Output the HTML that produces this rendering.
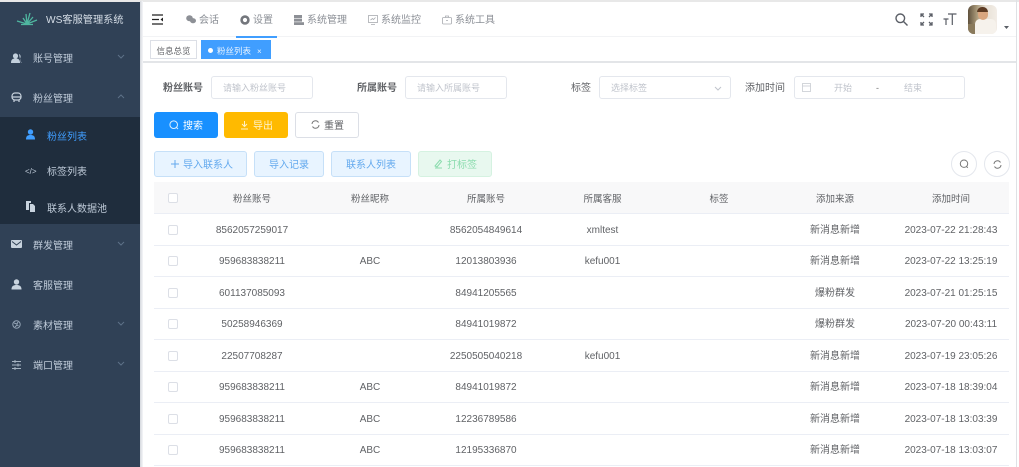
<!DOCTYPE html>
<html lang="zh"><head><meta charset="utf-8"><style>
*{box-sizing:border-box;margin:0;padding:0}
html,body{width:1019px;height:467px;overflow:hidden;background:#fff}
body{position:relative;font:10px/12px "Liberation Sans","Noto Sans CJK SC",sans-serif;color:#606266;filter:blur(.35px)}
.a{position:absolute;white-space:nowrap}
svg{position:absolute;overflow:visible}
.m{left:33px;color:#bfcbd9;font-size:10px;line-height:12px}
.s{left:47px;color:#bfcbd9}
.inp{border:1px solid #e4e7ed;border-radius:3px;height:23px;top:76px;background:#fff;color:#c0c4cc;line-height:23px;font-size:9px;padding-left:11px}
.lb{top:83px;color:#606266;font-weight:bold;font-size:10px}
.btn{border-radius:3px;height:26px;top:112px;line-height:30px;text-align:center}
.b2{border:1px solid #c6e0f8;background:#e8f4ff;color:#63a9ee;border-radius:3px;height:26px;top:151px;line-height:28px;text-align:center}
.r{position:absolute;left:154px;width:855px;height:31.5px;border-bottom:1px solid #ebeef5;display:grid;grid-template-columns:38px 120px 116px 116px 117px 116px 116px 116px;align-items:center;text-align:center;color:#606266}
.r span{position:relative;top:1.5px}
.r i{display:block;width:10px;height:10px;border:1px solid #dcdfe6;border-radius:2px;margin-left:14px;background:#fff;position:relative;top:1px}
.h{background:#f8f8f9;color:#606266;font-size:9.5px}
.h span{top:2.5px}
.nv{top:15px;color:#8b8f96;font-size:10px}
</style></head><body>
<div class="a" style="left:0;top:1px;width:140px;height:466px;background:#304156"></div>
<div class="a" style="left:0;top:117px;width:140px;height:107px;background:#1f2d3d"></div>
<div class="a" style="left:0;top:0;width:1019px;height:1.5px;background:#e8e8e8"></div>
<div class="a" style="left:140px;top:1px;width:3px;height:466px;background:linear-gradient(90deg,#d5d8de,#f5f6f8)"></div>
<div class="a" style="left:1016px;top:0;width:1px;height:467px;background:#dfe1e5"></div>

<svg style="left:16px;top:11px" width="22" height="16" viewBox="0 0 22 16" fill="none" stroke="#4fb6a0" stroke-width="1.3"><path d="M11 13L10 3M11 13L14 2M11 13L7 7M11 13L17 6M11 13L1 10M11 13L21 9M5 13.5L17 13.5"/></svg>
<div class="a" style="left:46px;top:15px;color:#d5dde6;font-size:10.2px">WS客服管理系统</div>

<svg style="left:11px;top:53px" width="11" height="11" viewBox="0 0 11 11" fill="#c2cfdc"><circle cx="4.5" cy="3" r="2.6"/><path d="M0 10c0-4 2-4.5 4.5-4.5S9 6 9 10z"/><path d="M8 1c2 1 2 3 1 4.500l1.500 4.500H10L9 6z"/></svg>
<div class="a m" style="top:54px">账号管理</div>
<svg style="left:117px;top:54px" width="8" height="5" fill="none" stroke="#5d7188"><path d="M1 1l3 3 3-3"/></svg>

<svg style="left:11px;top:92px" width="11" height="11" viewBox="0 0 11 11" fill="none" stroke="#c8d3de" stroke-width="1.2"><rect x="1" y="1" width="9" height="7" rx="3"/><path d="M0.500 5h10M3 8v2M8 8v2"/></svg>
<div class="a m" style="top:94px">粉丝管理</div>
<svg style="left:117px;top:94px" width="8" height="5" fill="none" stroke="#5d7188"><path d="M1 4l3-3 3 3"/></svg>

<svg style="left:25px;top:129px" width="11" height="11" viewBox="0 0 11 11" fill="#409eff"><circle cx="5.500" cy="3" r="2.700"/><path d="M1 10.500c0-3.500 1.500-4.500 4.500-4.500s4.500 1 4.500 4.500z"/></svg>
<div class="a" style="left:47px;top:132px;color:#409eff">粉丝列表</div>
<div class="a" style="left:25px;top:166px;color:#bfcbd9;font-size:8px">&lt;/&gt;</div>
<div class="a s" style="top:167px">标签列表</div>
<svg style="left:25px;top:201px" width="11" height="11" viewBox="0 0 11 11" fill="#c8d3de"><path d="M1 0h5v2H4v7H1z"/><path d="M5 3h3l2 2v6H5z"/></svg>
<div class="a s" style="top:204px">联系人数据池</div>

<svg style="left:11px;top:240px" width="11" height="9" viewBox="0 0 11 9"><rect width="11" height="8" rx="1" fill="#c8d3de"/><path d="M1 1.500l4.500 3.500L10 1.500" fill="none" stroke="#304156"/></svg>
<div class="a m" style="top:241px">群发管理</div>
<svg style="left:117px;top:241px" width="8" height="5" fill="none" stroke="#5d7188"><path d="M1 1l3 3 3-3"/></svg>

<svg style="left:11px;top:279px" width="11" height="11" viewBox="0 0 11 11" fill="#c8d3de"><circle cx="5.500" cy="3" r="2.700"/><path d="M0.500 10.500c0-3.500 2-4.500 5-4.500s5 1 5 4.500z"/></svg>
<div class="a m" style="top:281px">客服管理</div>

<svg style="left:12px;top:320px" width="9" height="9" viewBox="0 0 9 9" fill="none" stroke="#93a3b5"><circle cx="4.500" cy="4.500" r="3.700"/><path d="M2 3l3 1 1-2M3 7l2-2 1.500 1"/></svg>
<div class="a m" style="top:321px">素材管理</div>
<svg style="left:117px;top:321px" width="8" height="5" fill="none" stroke="#5d7188"><path d="M1 1l3 3 3-3"/></svg>

<svg style="left:12px;top:360px" width="9" height="10" viewBox="0 0 9 10" fill="none" stroke="#a5b3c2"><path d="M0 1.500h9M0 5h9M0 8.500h9M3 0v3M6 3.500v3M3 7v3"/></svg>
<div class="a m" style="top:361px">端口管理</div>
<svg style="left:117px;top:361px" width="8" height="5" fill="none" stroke="#5d7188"><path d="M1 1l3 3 3-3"/></svg>

<div class="a" style="left:143px;top:36px;width:873px;height:1px;background:#f2f3f5"></div>
<svg style="left:152px;top:14px" width="11" height="11" viewBox="0 0 11 11" fill="none" stroke="#222" stroke-width="1.200"><path d="M0 1h11M0 5.500h7M0 10h11"/><path d="M11 3.500L8.500 5.500 11 7.500z" fill="#222" stroke="none"/></svg>

<svg style="left:186px;top:15px" width="10" height="9" viewBox="0 0 10 9" fill="#8d9096"><ellipse cx="3.500" cy="3.300" rx="3.300" ry="3"/><ellipse cx="7" cy="5.700" rx="3" ry="2.600"/></svg>
<div class="a nv" style="left:199px">会话</div>
<svg style="left:240px;top:15px" width="10" height="10" viewBox="0 0 10 10" fill="none" stroke="#73767c" stroke-width="2.600"><circle cx="5" cy="5" r="3.400"/></svg>
<div class="a nv" style="left:253px">设置</div>
<div class="a" style="left:236px;top:36px;width:41px;height:1.500px;background:#409eff"></div>
<svg style="left:294px;top:15px" width="10" height="10" viewBox="0 0 10 10" fill="#8d9096"><rect width="8" height="3"/><rect y="3.600" width="8" height="3"/><rect y="7.200" width="10" height="2.800"/></svg>
<div class="a nv" style="left:307px">系统管理</div>
<svg style="left:368px;top:15px" width="10" height="10" viewBox="0 0 10 10" fill="none" stroke="#a8abb0" stroke-width=".8"><rect x=".5" y=".5" width="9" height="7"/><path d="M2.500 5l2-1.500 1 1 2-2M3 9.500h4"/></svg>
<div class="a nv" style="left:381px">系统监控</div>
<svg style="left:442px;top:15px" width="10" height="10" viewBox="0 0 10 10" fill="none" stroke="#a8abb0" stroke-width=".8"><rect x=".5" y="2.500" width="9" height="6.500" rx="1"/><path d="M3.500 2.500V1h3v1.500M4 5.500h2"/></svg>
<div class="a nv" style="left:455px">系统工具</div>

<svg style="left:895px;top:13px" width="13" height="13" viewBox="0 0 13 13" fill="none" stroke="#5a5e66" stroke-width="1.400"><circle cx="5.300" cy="5.300" r="4.300"/><path d="M8.500 8.500l4 4"/></svg>
<svg style="left:920px;top:13px" width="13" height="13" viewBox="0 0 13 13" fill="none" stroke="#5a5e66" stroke-width="1.300"><path d="M1 4V1h3M9 1h3v3M12 9v3H9M4 12H1V9M1.500 1.500l2.500 2.500M11.500 1.500L9 4M11.500 11.500L9 9M1.500 11.500L4 9"/></svg>
<svg style="left:943px;top:13px" width="14" height="13" viewBox="0 0 14 13" fill="none" stroke="#5a5e66" stroke-width="1.200"><path d="M5 1h8.500M9.300 1v11M.5 6h5M3 6v6"/></svg>
<div class="a" style="left:968px;top:5px;width:29px;height:29px;border-radius:6px;overflow:hidden;background:linear-gradient(90deg,#5f513d 0,#a89878 30%,#e8e1d6 60%,#f2ede6 100%)">
<div class="a" style="left:0;top:19px;width:9px;height:10px;background:#8a7a5c"></div>
<div class="a" style="left:7px;top:14px;width:21px;height:15px;background:#f6f2ec;border-radius:5px 5px 0 0"></div>
<div class="a" style="left:10px;top:3px;width:10px;height:12px;background:#d9a67f;border-radius:5px"></div>
<div class="a" style="left:9px;top:2px;width:11px;height:5px;background:#5c3a22;border-radius:5px 5px 0 0"></div>
</div>
<svg style="left:1004px;top:26px" width="5" height="3"><path d="M0 0h5L2.500 3z" fill="#5a5e66"/></svg>

<div class="a" style="left:143px;top:61px;width:873px;height:1.500px;background:#e3e5e8"></div>
<div class="a" style="left:150px;top:40px;width:47px;height:19px;border:1px solid #dcdfe6;background:#fff;color:#606266;font-size:8.500px;line-height:21px;text-align:center">信息总览</div>
<div class="a" style="left:201px;top:40px;width:70px;height:19px;background:#409eff;color:#e8f3ff;font-size:8.500px;line-height:23px">
<span class="a" style="left:7px;top:7.500px;width:5px;height:5px;border-radius:50%;background:#fff"></span><span class="a" style="left:16px">粉丝列表</span><span class="a" style="left:56px;font-size:8px">×</span></div>

<div class="a lb" style="left:163px">粉丝账号</div><div class="a inp" style="left:211px;width:102px">请输入粉丝账号</div>
<div class="a lb" style="left:357px">所属账号</div><div class="a inp" style="left:405px;width:102px">请输入所属账号</div>
<div class="a lb" style="left:571px;font-weight:normal">标签</div><div class="a inp" style="left:599px;width:132px">选择标签
<svg style="left:114px;top:9px" width="8" height="5" fill="none" stroke="#c0c4cc"><path d="M1 1l3 3 3-3"/></svg></div>
<div class="a lb" style="left:745px;font-weight:normal">添加时间</div><div class="a inp" style="left:794px;width:171px;padding:0">
<svg style="left:7px;top:6px" width="9" height="9" fill="none" stroke="#c9ccd2" stroke-width=".8"><rect x=".5" y=".5" width="8" height="8"/><path d="M.5 3h8"/></svg>
<span class="a" style="left:39px">开始</span><span class="a" style="left:81px;color:#777">-</span><span class="a" style="left:109px">结束</span></div>

<div class="a btn" style="left:154px;width:64px;background:#1890ff;color:#fff">
<svg style="left:15px;top:8px" width="10" height="10" fill="none" stroke="#dcefff"><circle cx="4.700" cy="4.700" r="3.800"/><path d="M7.500 7.500l1.500 1.500"/></svg><span class="a" style="left:29px">搜索</span></div>
<div class="a btn" style="left:224px;width:64px;background:#ffba00;color:#fff4d0">
<svg style="left:16px;top:8px" width="9" height="10" fill="none" stroke="#fff0c4"><path d="M4.500 1v5M2 4l2.500 2.500L7 4M1 9h7"/></svg><span class="a" style="left:29px">导出</span></div>
<div class="a btn" style="left:295px;width:64px;background:#fff;border:1px solid #dcdfe6;color:#606266;line-height:28px">
<svg style="left:15px;top:7px" width="9" height="9" fill="none" stroke="#777"><path d="M1 4A3.500 3.500 0 0 1 7.500 2.500M8 5A3.500 3.500 0 0 1 1.500 6.500"/></svg><span class="a" style="left:28px">重置</span></div>

<div class="a b2" style="left:154px;width:93px"><svg style="left:15px;top:7px" width="10" height="10" stroke="#63a9ee" fill="none"><path d="M5 1v8M1 5h8"/></svg><span class="a" style="left:28px">导入联系人</span></div>
<div class="a b2" style="left:254px;width:70px">导入记录</div>
<div class="a b2" style="left:331px;width:80px">联系人列表</div>
<div class="a b2" style="left:418px;width:74px;background:#e8f8ef;border-color:#d5f2e1;color:#8bdcae"><svg style="left:15px;top:7px" width="9" height="10" fill="none" stroke="#8bdcae"><path d="M1 7l5-6 1.500 1.500L3 8zM1 9h7"/></svg><span class="a" style="left:28px">打标签</span></div>

<div class="a" style="left:951px;top:151px;width:26px;height:26px;border:1px solid #e4e7ed;border-radius:50%"><svg style="left:7px;top:7px" width="10" height="10" fill="none" stroke="#777"><circle cx="5" cy="4.700" r="3.700"/><path d="M7.500 7.500l1.300 1.300"/></svg></div>
<div class="a" style="left:984px;top:151px;width:26px;height:26px;border:1px solid #e4e7ed;border-radius:50%"><svg style="left:8px;top:8px" width="9" height="9" fill="none" stroke="#777"><path d="M1 4A3.500 3.500 0 0 1 7.500 2.500M8 5A3.500 3.500 0 0 1 1.500 6.500"/></svg></div>

<div class="r h" style="top:182px"><i></i><span>粉丝账号</span><span>粉丝昵称</span><span>所属账号</span><span>所属客服</span><span>标签</span><span>添加来源</span><span>添加时间</span></div>
<div class="r" style="top:214px"><i></i><span>8562057259017</span><span></span><span>8562054849614</span><span>xmltest</span><span></span><span>新消息新增</span><span>2023-07-22 21:28:43</span></div>
<div class="r" style="top:245px"><i></i><span>959683838211</span><span>ABC</span><span>12013803936</span><span>kefu001</span><span></span><span>新消息新增</span><span>2023-07-22 13:25:19</span></div>
<div class="r" style="top:277px"><i></i><span>601137085093</span><span></span><span>84941205565</span><span></span><span></span><span>爆粉群发</span><span>2023-07-21 01:25:15</span></div>
<div class="r" style="top:308px"><i></i><span>50258946369</span><span></span><span>84941019872</span><span></span><span></span><span>爆粉群发</span><span>2023-07-20 00:43:11</span></div>
<div class="r" style="top:340px"><i></i><span>22507708287</span><span></span><span>2250505040218</span><span>kefu001</span><span></span><span>新消息新增</span><span>2023-07-19 23:05:26</span></div>
<div class="r" style="top:371px"><i></i><span>959683838211</span><span>ABC</span><span>84941019872</span><span></span><span></span><span>新消息新增</span><span>2023-07-18 18:39:04</span></div>
<div class="r" style="top:403px"><i></i><span>959683838211</span><span>ABC</span><span>12236789586</span><span></span><span></span><span>新消息新增</span><span>2023-07-18 13:03:39</span></div>
<div class="r" style="top:434px"><i></i><span>959683838211</span><span>ABC</span><span>12195336870</span><span></span><span></span><span>新消息新增</span><span>2023-07-18 13:03:07</span></div>
</body></html>
